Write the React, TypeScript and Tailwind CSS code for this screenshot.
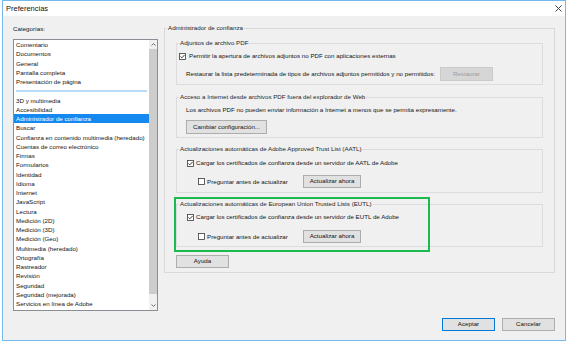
import React from 'react';

const categories: string[] = [
    'Comentario',
    'Documentos',
    'General',
    'Pantalla completa',
    'Presentación de página',
    '---',
    '3D y multimedia',
    'Accesibilidad',
    'Administrador de confianza',
    'Buscar',
    'Confianza en contenido multimedia (heredado)',
    'Cuentas de correo electrónico',
    'Firmas',
    'Formularios',
    'Identidad',
    'Idioma',
    'Internet',
    'JavaScript',
    'Lectura',
    'Medición (2D)',
    'Medición (3D)',
    'Medición (Geo)',
    'Multimedia (heredado)',
    'Ortografía',
    'Rastreador',
    'Revisión',
    'Seguridad',
    'Seguridad (mejorada)',
    'Servicios en línea de Adobe',
    'Unidades',
];

const Check: React.FC<{ checked?: boolean }> = ({ checked = false }) => (
    <svg width="7" height="7" viewBox="0 0 7 7" className="shrink-0">
        <rect x="0.5" y="0.5" width="6" height="6" fill="#ffffff" stroke="#3a3a3a" strokeWidth="0.8" />
        {checked && <path d="M1.4 3.5 L2.8 4.9 L5.6 1.9" fill="none" stroke="#222222" strokeWidth="0.9" />}
    </svg>
);

const Button: React.FC<{ children: React.ReactNode; className?: string; disabled?: boolean; focused?: boolean }> = ({
    children,
    className = '',
    disabled = false,
    focused = false,
}) => (
    <div
        className={`flex shrink-0 items-center justify-center border text-[6.2px] leading-none ${
            disabled
                ? 'border-[#cacaca] bg-[#d6d6d6] text-[#9d9d9d]'
                : focused
                  ? 'border-[#0078d7] bg-[#e1e1e1] text-[#111111]'
                  : 'border-[#adadad] bg-[#e1e1e1] text-[#111111]'
        } ${className}`}
    >
        {children}
    </div>
);

const Legend: React.FC<{ children: React.ReactNode }> = ({ children }) => (
    <legend className="ml-[2px] px-[1px] text-[6.2px] leading-[8px] text-[#1e1e1e]">{children}</legend>
);

export default function App() {
    return (
        <div className="h-[343px] w-[566px] bg-white pb-[2px] pl-[2px] font-['Liberation_Sans',Arial,sans-serif] text-[#141414]">
            <div className="flex h-full flex-col border border-[#74b9ec]">
                {/* title bar */}
                <div className="flex h-[15px] shrink-0 items-center justify-between bg-white pl-[3px] pr-[3px]">
                    <span className="text-[7.5px] leading-none text-[#111111]">Preferencias</span>
                    <svg width="7" height="7" viewBox="0 0 7 7">
                        <path d="M0.5 0.5 L6.5 6.5 M6.5 0.5 L0.5 6.5" stroke="#444444" strokeWidth="1" />
                    </svg>
                </div>

                <div className="flex flex-1 flex-col bg-[#f0f0f0] pb-[9px] pl-[10px] pr-[10px]">
                    <div className="flex items-start gap-[6px]">
                        {/* categories */}
                        <div className="w-[145px] shrink-0 pt-[9px]">
                            <div className="text-[6.2px] leading-[8px]">Categorías:</div>
                            <div className="mt-[6px] flex h-[272px] border border-[#8a8d94] bg-white">
                                <div className="flex-1 overflow-hidden">
                                    {categories.map((c, i) =>
                                        c === '---' ? (
                                            <div key={i} className="flex h-[9.26px] items-center pl-[2px] pr-[2px]">
                                                <div className="h-[2px] w-full bg-[#b6dcf6]" />
                                            </div>
                                        ) : (
                                            <div
                                                key={i}
                                                className={`h-[9.26px] whitespace-nowrap pl-[2px] text-[6.2px] leading-[9.26px] ${
                                                    c === 'Administrador de confianza' ? 'bg-[#1589f0] text-white' : ''
                                                }`}
                                            >
                                                {c}
                                            </div>
                                        ),
                                    )}
                                </div>
                                <div className="flex w-[8px] shrink-0 flex-col bg-[#f0f0f0]">
                                    <div className="flex h-[9px] items-center justify-center">
                                        <svg width="5" height="3" viewBox="0 0 5 3">
                                            <path d="M0.5 2.5 L2.5 0.6 L4.5 2.5" fill="none" stroke="#606060" strokeWidth="0.9" />
                                        </svg>
                                    </div>
                                    <div className="h-[245px] bg-[#cdcdcd]" />
                                    <div className="flex-1" />
                                    <div className="flex h-[9px] items-center justify-center">
                                        <svg width="5" height="3" viewBox="0 0 5 3">
                                            <path d="M0.5 0.5 L2.5 2.4 L4.5 0.5" fill="none" stroke="#606060" strokeWidth="0.9" />
                                        </svg>
                                    </div>
                                </div>
                            </div>
                        </div>

                        {/* trust manager panel */}
                        <div className="flex-1 pt-[8px]">
                            <fieldset className="border border-[#d9d9d9]">
                                <Legend>Administrador de confianza</Legend>
                                <div className="px-[11px] pb-[4px]">
                                    <fieldset className="mt-[7px] border border-[#dcdcdc]">
                                        <Legend>Adjuntos de archivo PDF</Legend>
                                        <div className="pb-[3px]">
                                            <div className="mt-[5px] flex h-[8px] items-center gap-[3px] pl-[2px] text-[6.2px]">
                                                <Check checked />
                                                <span className="whitespace-nowrap">
                                                    Permitir la apertura de archivos adjuntos no PDF con aplicaciones externas
                                                </span>
                                            </div>
                                            <div className="mt-[7px] flex h-[14px] items-center pl-[9px] text-[6.2px]">
                                                <span className="w-[254px] shrink-0 whitespace-nowrap">
                                                    Restaurar la lista predeterminada de tipos de archivos adjuntos permitidos y no permitidos:
                                                </span>
                                                <Button disabled className="h-[14px] w-[53px]">
                                                    Restaurar
                                                </Button>
                                            </div>
                                        </div>
                                    </fieldset>

                                    <fieldset className="mt-[8px] border border-[#dcdcdc]">
                                        <Legend>Acceso a Internet desde archivos PDF fuera del explorador de Web</Legend>
                                        <div className="pb-[3px] pl-[9px]">
                                            <div className="mt-[5px] h-[8px] whitespace-nowrap text-[6.2px] leading-[8px]">
                                                Los archivos PDF no pueden enviar información a Internet a menos que se permita expresamente.
                                            </div>
                                            <Button className="mt-[6px] h-[14px] w-[81px]">Cambiar configuración...</Button>
                                        </div>
                                    </fieldset>

                                    <fieldset className="mt-[7px] border border-[#dcdcdc]">
                                        <Legend>Actualizaciones automáticas de Adobe Approved Trust List (AATL)</Legend>
                                        <div className="pb-[4px]">
                                            <div className="mt-[6px] flex h-[8px] items-center gap-[2px] pl-[10px] text-[6.2px]">
                                                <Check checked />
                                                <span className="whitespace-nowrap">
                                                    Cargar los certificados de confianza desde un servidor de AATL de Adobe
                                                </span>
                                            </div>
                                            <div className="mt-[8px] flex h-[13px] items-center pl-[21px] text-[6.2px]">
                                                <div className="flex w-[105px] shrink-0 items-center gap-[2px]">
                                                    <Check />
                                                    <span className="whitespace-nowrap">Preguntar antes de actualizar</span>
                                                </div>
                                                <Button className="h-[13px] w-[58px]">Actualizar ahora</Button>
                                            </div>
                                        </div>
                                    </fieldset>

                                    <div className="relative mt-[7px]">
                                        <fieldset className="border border-[#dcdcdc]">
                                            <Legend>Actualizaciones automáticas de European Union Trusted Lists (EUTL)</Legend>
                                            <div className="pb-[3px]">
                                                <div className="mt-[5px] flex h-[8px] items-center gap-[2px] pl-[10px] text-[6.2px]">
                                                    <Check checked />
                                                    <span className="whitespace-nowrap">
                                                        Cargar los certificados de confianza desde un servidor de EUTL de Adobe
                                                    </span>
                                                </div>
                                                <div className="mt-[9px] flex h-[13px] items-center pl-[21px] text-[6.2px]">
                                                    <div className="flex w-[105px] shrink-0 items-center gap-[2px]">
                                                        <Check />
                                                        <span className="whitespace-nowrap">Preguntar antes de actualizar</span>
                                                    </div>
                                                    <Button className="h-[13px] w-[58px]">Actualizar ahora</Button>
                                                </div>
                                            </div>
                                        </fieldset>
                                        <div className="pointer-events-none absolute left-[-2px] top-[-3px] h-[55px] w-[256px] border-2 border-[#1cb94e]" />
                                    </div>

                                    <Button className="mt-[8px] h-[13px] w-[53px]">Ayuda</Button>
                                </div>
                            </fieldset>
                        </div>
                    </div>

                    <div className="mt-auto flex justify-end gap-[7px]">
                        <Button focused className="h-[13px] w-[53px]">
                            Aceptar
                        </Button>
                        <Button className="h-[13px] w-[53px]">Cancelar</Button>
                    </div>
                </div>
            </div>
        </div>
    );
}
